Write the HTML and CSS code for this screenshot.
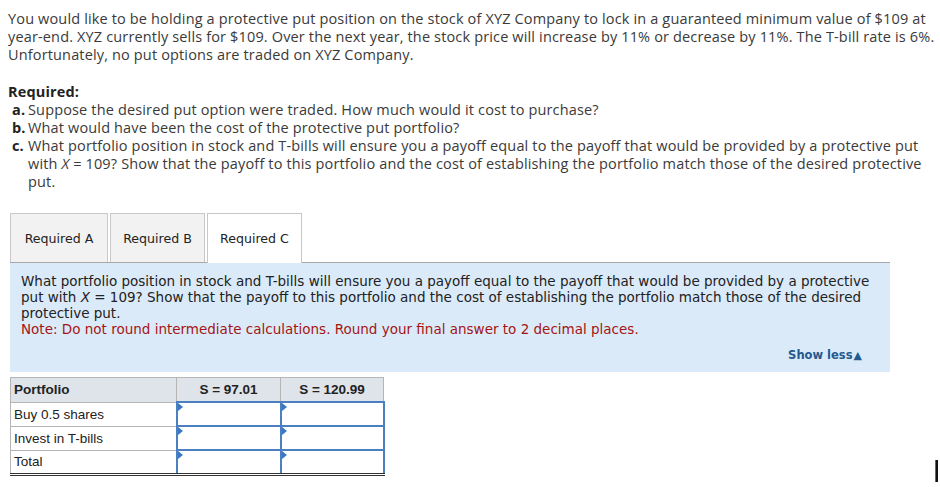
FILE: index.html
```html
<!DOCTYPE html>
<html>
<head>
<meta charset="utf-8">
<link rel="stylesheet" href="styles.css">
</head>
<body>
<div class="page">
  <p class="intro">You would like to be holding a protective put position on the stock of XYZ Company to lock in a guaranteed minimum value of $109 at<br>year-end. XYZ currently sells for $109. Over the next year, the stock price will increase by 11% or decrease by 11%. The T-bill rate is 6%.<br>Unfortunately, no put options are traded on XYZ Company.</p>

  <div class="required">
    <div class="req-title">Required:</div>
    <div class="req-item"><b>a.</b><span>Suppose the desired put option were traded. How much would it cost to purchase?</span></div>
    <div class="req-item"><b>b.</b><span>What would have been the cost of the protective put portfolio?</span></div>
    <div class="req-item"><b>c.</b><span>What portfolio position in stock and T-bills will ensure you a payoff equal to the payoff that would be provided by a protective put<br>with <i>X</i> = 109? Show that the payoff to this portfolio and the cost of establishing the portfolio match those of the desired protective<br>put.</span></div>
  </div>

  <div class="tabs">
    <div class="tab tab-a">Required A</div>
    <div class="tab">Required B</div>
    <div class="tab active">Required C</div>
  </div>

  <div class="panel">
    <p class="q">What portfolio position in stock and T-bills will ensure you a payoff equal to the payoff that would be provided by a protective<br>put with <i>X</i> = 109? Show that the payoff to this portfolio and the cost of establishing the portfolio match those of the desired<br>protective put.</p>
    <p class="note">Note: Do not round intermediate calculations. Round your final answer to 2 decimal places.</p>
    <div class="show-less">Show less<span class="tri">&#9650;</span></div>
  </div>

  <table class="grid">
    <colgroup><col class="c1"><col class="c2"><col class="c3"></colgroup>
    <thead>
      <tr><th class="lbl">Portfolio</th><th>S = 97.01</th><th>S = 120.99</th></tr>
    </thead>
    <tbody>
      <tr><td class="lbl">Buy 0.5 shares</td><td class="in"><span class="flag"></span></td><td class="in"><span class="flag"></span></td></tr>
      <tr><td class="lbl">Invest in T-bills</td><td class="in"><span class="flag"></span></td><td class="in"><span class="flag"></span></td></tr>
      <tr class="total"><td class="lbl">Total</td><td class="in"><span class="flag"></span></td><td class="in"><span class="flag"></span></td></tr>
    </tbody>
  </table>
</div>
<div class="cursor"></div>
</body>
</html>
```
FILE: styles.css
```css
html, body {
  margin: 0;
  padding: 0;
  background: #fff;
  overflow: hidden;
  width: 940px;
  height: 487px;
}
.page {
  position: relative;
  padding: 10px 0 0 8px;
  font-family: "Open Sans", "Liberation Sans", sans-serif;
  color: #333;
}
.intro {
  margin: 0;
  font-size: 14.5px;
  letter-spacing: 0.15px;
  line-height: 18px;
  white-space: nowrap;
  color: #3a3a3a;
}
.required {
  margin-top: 19px;
  font-size: 14.5px;
  letter-spacing: 0.15px;
  line-height: 18px;
  color: #3a3a3a;
}
.req-title {
  font-weight: bold;
  color: #222;
}
.req-item {
  display: flex;
  white-space: nowrap;
  padding-left: 4px;
}
.req-item b {
  width: 16px;
  flex: none;
  color: #222;
}
.tabs {
  display: flex;
  gap: 2px;
  margin-top: 22px;
  margin-left: 2px;
  font-family: "DejaVu Sans", Verdana, sans-serif;
  font-size: 12.6px;
  color: #222;
}
.tab {
  width: 95px;
  height: 49px;
  box-sizing: border-box;
  border: 1px solid #c8c8c8;
  border-bottom: none;
  background: #f2f2f2;
  display: flex;
  align-items: center;
  justify-content: center;
}
.tab.tab-a {
  width: 98px;
}
.tab.active {
  background: #fff;
  height: 50px;
  margin-bottom: -1px;
  position: relative;
}
.panel {
  margin-left: 2px;
  width: 880px;
  height: 110px;
  box-sizing: border-box;
  background: #dbeaf8;
  border-top: 1px solid #a8a8a8;
  padding: 10px 11px 0;
  font-family: "DejaVu Sans", Verdana, sans-serif;
  font-size: 13.5px;
  line-height: 16px;
  color: #222;
}
.panel p {
  margin: 0;
  white-space: nowrap;
}
.note {
  color: #a31515;
}
.show-less {
  text-align: right;
  margin-top: 10px;
  margin-right: 17px;
  font-weight: bold;
  font-size: 11.5px;
  color: #235a8f;
}
.tri {
  font-size: 11px;
  margin-left: 1px;
}
.grid {
  margin-top: 5px;
  margin-left: 2px;
  border-collapse: collapse;
  table-layout: fixed;
  width: 373px;
  font-family: "Liberation Sans", Arial, sans-serif;
  font-size: 13.5px;
  color: #222;
}
.grid col.c1 { width: 166px; }
.grid col.c2 { width: 104px; }
.grid col.c3 { width: 103px; }
.grid th {
  background: #dfe3ea;
  border: 1px solid #b5b5b5;
  height: 23px;
  padding: 0;
  font-weight: bold;
  text-align: center;
}
.grid th.lbl {
  text-align: left;
  padding-left: 3px;
}
.grid td {
  height: 22px;
  padding: 0;
  border: 1px solid #b5b5b5;
}
.grid td.lbl {
  padding-left: 3px;
}
.grid td.in {
  border: 2px solid #4a7fc1;
  position: relative;
}
.grid tr.total td {
  border-bottom: 3px double #333;
}
.grid tr.total td.in {
  border-top: 2px solid #2a3a55;
  border-bottom: 3px double #333;
}
.flag {
  position: absolute;
  left: 0;
  top: 0;
  width: 0;
  height: 0;
  border-top: 4px solid transparent;
  border-bottom: 4px solid transparent;
  border-left: 5px solid #3a78c4;
}
.cursor {
  position: absolute;
  left: 935px;
  top: 460px;
  width: 2px;
  height: 22px;
  background: #111;
  border-left: 1px solid #666;
}
```
